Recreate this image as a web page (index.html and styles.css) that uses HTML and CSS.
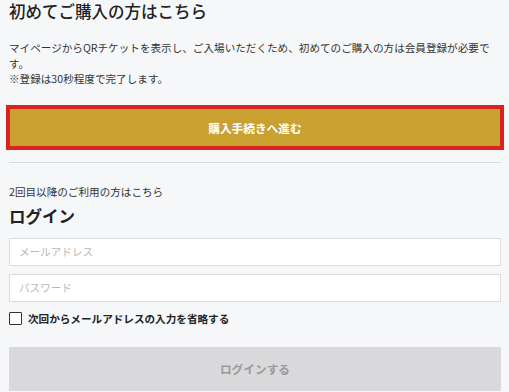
FILE: index.html
```html
<!DOCTYPE html>
<html lang="ja">
<head>
  <meta charset="UTF-8">
  <meta name="viewport" content="width=device-width, initial-scale=1.0">
  <title>ログイン</title>
  <link rel="stylesheet" href="styles.css">
</head>
<body>
  <div class="page">
    <!-- 初回購入 -->
    <section class="first">
      <h1 class="title">初めてご購入の方はこちら</h1>
      <p class="lead">マイページからQRチケットを表示し、ご入場いただくため、初めてのご購入の方は会員登録が必要です。<br>※登録は30秒程度で完了します。</p>
      <button class="btn btn-buy" type="button">購入手続きへ進む</button>
    </section>

    <hr class="sep">

    <!-- ログイン -->
    <section class="login">
      <p class="sub">2回目以降のご利用の方はこちら</p>
      <h2 class="login-title">ログイン</h2>
      <input class="field" type="email" placeholder="メールアドレス">
      <input class="field" type="password" placeholder="パスワード">
      <label class="check">
        <input type="checkbox">
        <span>次回からメールアドレスの入力を省略する</span>
      </label>
      <button class="btn btn-login" type="button" disabled>ログインする</button>
    </section>
  </div>
</body>
</html>
```
FILE: styles.css
```css
/* ページ全体 */
body {
  margin: 0;
  background: #f6f7f9;
  color: #222;
  font-family: "Noto Sans CJK JP", "Noto Sans", sans-serif;
  font-size: 10.6px;
}

.page {
  padding: 0 8px 0 9px;
}

.title {
  margin: 0;
  font-size: 16.5px;
  font-weight: 500;
  line-height: 23px;
}

.lead {
  margin: 17px 0 0;
  line-height: 15.5px;
  color: #333;
}

.btn {
  display: block;
  width: 100%;
  border: none;
  font-family: inherit;
  font-size: 11.7px;
  font-weight: 700;
  cursor: pointer;
}

.btn-buy {
  width: calc(100% - 2px);
  margin: 22px 1px 0;
  height: 37px;
  background: #c9a131;
  color: #fff;
  outline: 4px solid #dc2121;
}

.sep {
  margin: 16px 0 0;
  border: none;
  border-top: 1px solid #d8d9dc;
}

.sub {
  margin: 21px 0 0;
  line-height: 15px;
  color: #333;
}

.login-title {
  margin: 6px 0 0;
  font-size: 16.5px;
  font-weight: 700;
  line-height: 22px;
}

.field {
  display: block;
  box-sizing: border-box;
  width: 100%;
  height: 28px;
  margin: 11px 0 0;
  padding: 0 9px;
  border: 1px solid #dcdcdc;
  background: #fff;
  font-family: inherit;
  font-size: 10.6px;
}

.field + .field {
  margin-top: 8px;
}

.field::placeholder {
  color: #b9b9b9;
}

.check {
  display: flex;
  align-items: center;
  gap: 6px;
  margin-top: 10px;
  font-weight: 700;
  line-height: 14px;
}

.check input {
  appearance: none;
  margin: 0;
  width: 13px;
  height: 13px;
  border: 1.5px solid #333;
  border-radius: 1px;
  background: #fff;
  box-sizing: border-box;
}

.btn-login {
  margin-top: 21px;
  height: 44px;
  background: #d9d9db;
  color: #9a9a9a;
  cursor: default;
}
```
